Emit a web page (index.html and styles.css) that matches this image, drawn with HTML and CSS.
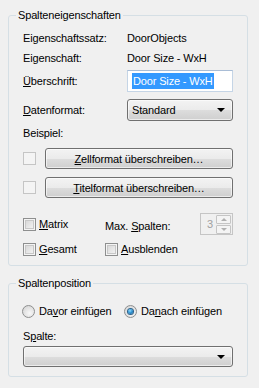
FILE: index.html
```html
<!DOCTYPE html>
<html>
<head>
<meta charset="utf-8">
<link rel="stylesheet" href="styles.css">
</head>
<body>
<fieldset class="group group-props">
  <legend class="group-title">Spalteneigenschaften</legend>
  <div class="row row-text">
    <span class="label">Eigenschaftssatz:</span>
    <span class="value">DoorObjects</span>
  </div>
  <div class="row row-text">
    <span class="label">Eigenschaft:</span>
    <span class="value">Door Size - WxH</span>
  </div>
  <div class="row row-input">
    <span class="label"><u>Ü</u>berschrift:</span>
    <div class="textbox"><span class="selected">Door Size - WxH</span></div>
  </div>
  <div class="row row-select">
    <span class="label"><u>D</u>atenformat:</span>
    <div class="combo combo-small"><span class="combo-text">Standard</span><span class="arrow"></span></div>
  </div>
  <div class="row row-beispiel">
    <span class="label">Beispiel:</span>
  </div>
  <div class="row row-btn row-btn1">
    <span class="check check-disabled"></span>
    <div class="button"><span><u>Z</u>ellformat überschreiben…</span></div>
  </div>
  <div class="row row-btn row-btn2">
    <span class="check check-disabled"></span>
    <div class="button"><span><u>T</u>itelformat überschreiben…</span></div>
  </div>
  <div class="row row-matrix">
    <label class="checkitem checkitem-left"><span class="check"></span><span><u>M</u>atrix</span></label>
    <span class="maxlabel">Max. <u>S</u>palten:</span>
    <div class="spinner">
      <span class="spin-val">3</span>
      <div class="spin-btns">
        <span class="spin-btn"><span class="tri tri-up"></span></span>
        <span class="spin-btn"><span class="tri tri-down"></span></span>
      </div>
    </div>
  </div>
  <div class="row row-gesamt">
    <label class="checkitem checkitem-left"><span class="check"></span><span><u>G</u>esamt</span></label>
    <label class="checkitem"><span class="check"></span><span><u>A</u>usblenden</span></label>
  </div>
</fieldset>

<fieldset class="group group-pos">
  <legend class="group-title">Spaltenposition</legend>
  <div class="row row-radio">
    <label class="radioitem radioitem-left"><span class="radio"></span><span>Da<u>v</u>or einfügen</span></label>
    <label class="radioitem"><span class="radio radio-on"></span><span>Da<u>n</u>ach einfügen</span></label>
  </div>
  <div class="row row-spalte">
    <span class="label">S<u>p</u>alte:</span>
  </div>
  <div class="combo combo-wide"><span class="combo-text"></span><span class="arrow"></span></div>
</fieldset>
</body>
</html>
```

FILE: styles.css
```css
* { box-sizing: border-box; }
html, body {
  margin: 0;
  padding: 0;
  background: #f0f0f0;
  width: 259px;
  height: 388px;
  overflow: hidden;
}
body {
  font-family: "Liberation Sans", Arial, sans-serif;
  font-size: 11px;
  letter-spacing: -0.15px;
  color: #000;
}
u { text-decoration: underline; text-underline-offset: 1px; }

.group {
  margin: 0 11px 0 8px;
  border: 1px solid #d5dfe5;
  border-radius: 3px;
  padding: 0 14px;
  min-width: 0;
}
.group-props { margin-top: 8px; padding-top: 6px; padding-bottom: 6px; }
.group-pos { margin-top: 10px; padding-top: 11px; padding-bottom: 9px; }

.group-title {
  line-height: 14px;
  padding: 0 2px;
  margin-left: -7px;
}

.row { display: flex; align-items: center; }
.label { width: 104px; flex: none; }
.row-text { height: 20px; }
.row-input { height: 22px; margin-top: 2px; }
.row-select { height: 22px; margin-top: 7px; }
.row-beispiel { height: 20px; margin-top: 2px; }
.row-btn { height: 21px; }
.row-btn1 { margin-top: 5px; }
.row-btn2 { margin-top: 8px; }
.row-matrix { height: 22px; margin-top: 15px; }
.row-gesamt { height: 20px; margin-top: 4px; }

.textbox {
  width: 106px;
  height: 22px;
  border: 1px solid #c5d5e6;
  border-top-color: #a9bdd6;
  background: #fff;
  padding: 2px 0 0 4px;
  line-height: 16px;
}
.selected {
  background: #3399ff;
  color: #fff;
  padding: 0 1px;
  display: inline-block;
  line-height: 16px;
}

.combo {
  height: 22px;
  border: 1px solid #707070;
  border-radius: 3px;
  background: linear-gradient(#f3f3f3 0%, #ebebeb 50%, #dddddd 51%, #cfcfcf 100%);
  display: flex;
  align-items: center;
  padding: 0 7px 0 4px;
  box-shadow: inset 0 0 0 1px rgba(255,255,255,0.6);
}
.combo-small { width: 106px; }
.combo-wide { width: 210px; height: 21px; }
.combo-text { flex: 1; }
.arrow {
  width: 0; height: 0;
  border-left: 4px solid transparent;
  border-right: 4px solid transparent;
  border-top: 4px solid #000;
}

.button {
  flex: 1;
  height: 21px;
  margin-left: 9px;
  border: 1px solid #707070;
  border-radius: 3px;
  background: linear-gradient(#f3f3f3 0%, #ebebeb 50%, #dddddd 51%, #cfcfcf 100%);
  box-shadow: inset 0 0 0 1px rgba(255,255,255,0.6);
  display: flex;
  align-items: center;
  justify-content: center;
}

.check {
  width: 13px;
  height: 13px;
  flex: none;
  border: 1px solid #8e8f8f;
  background: linear-gradient(135deg, #d2d2d2, #f8f8f8);
  box-shadow: inset 0 0 0 1px #f4f4f4, inset 0 0 0 2px #c7c7c7;
}
.check-disabled {
  border-color: #c5c5c5;
  background: #f4f4f4;
  box-shadow: none;
}

.checkitem { display: flex; align-items: center; gap: 3px; }
.checkitem-left { width: 82px; flex: none; }
.maxlabel { margin-top: 4px; width: 95px; flex: none; }

.spinner {
  margin-left: auto;
  width: 33px;
  height: 22px;
  border: 1px solid #c5c5c5;
  display: flex;
  align-items: center;
  padding: 1px;
}
.spin-val { flex: 1; text-align: center; color: #a0a0a0; padding-left: 2px; }
.spin-btns { display: flex; flex-direction: column; gap: 1px; width: 15px; }
.spin-btn {
  height: 9px;
  border: 1px solid #c5c5c5;
  border-radius: 1px;
  background: #f4f4f4;
  display: flex;
  align-items: center;
  justify-content: center;
}
.tri { width: 0; height: 0; border-left: 3px solid transparent; border-right: 3px solid transparent; }
.tri-up { border-bottom: 3px solid #b0b0b0; }
.tri-down { border-top: 3px solid #b0b0b0; }

.row-radio { height: 20px; }
.radioitem { display: flex; align-items: center; gap: 4px; }
.radioitem-left { width: 102px; flex: none; margin-left: -1px; }
.radio {
  width: 13px;
  height: 13px;
  flex: none;
  border-radius: 50%;
  border: 1px solid #8e8f8f;
  background: radial-gradient(circle at 60% 65%, #f8f8f8 0%, #d8d8d8 80%);
  display: flex;
  align-items: center;
  justify-content: center;
}
.radio-on::after {
  content: "";
  width: 5px;
  height: 5px;
  border-radius: 50%;
  background: radial-gradient(circle at 40% 35%, #8fdcff 0%, #2a8fd0 50%, #0e4f86 100%);
  box-shadow: 0 0 0 1px #2c628b;
}
.row-spalte { height: 20px; margin-top: 5px; }
```
